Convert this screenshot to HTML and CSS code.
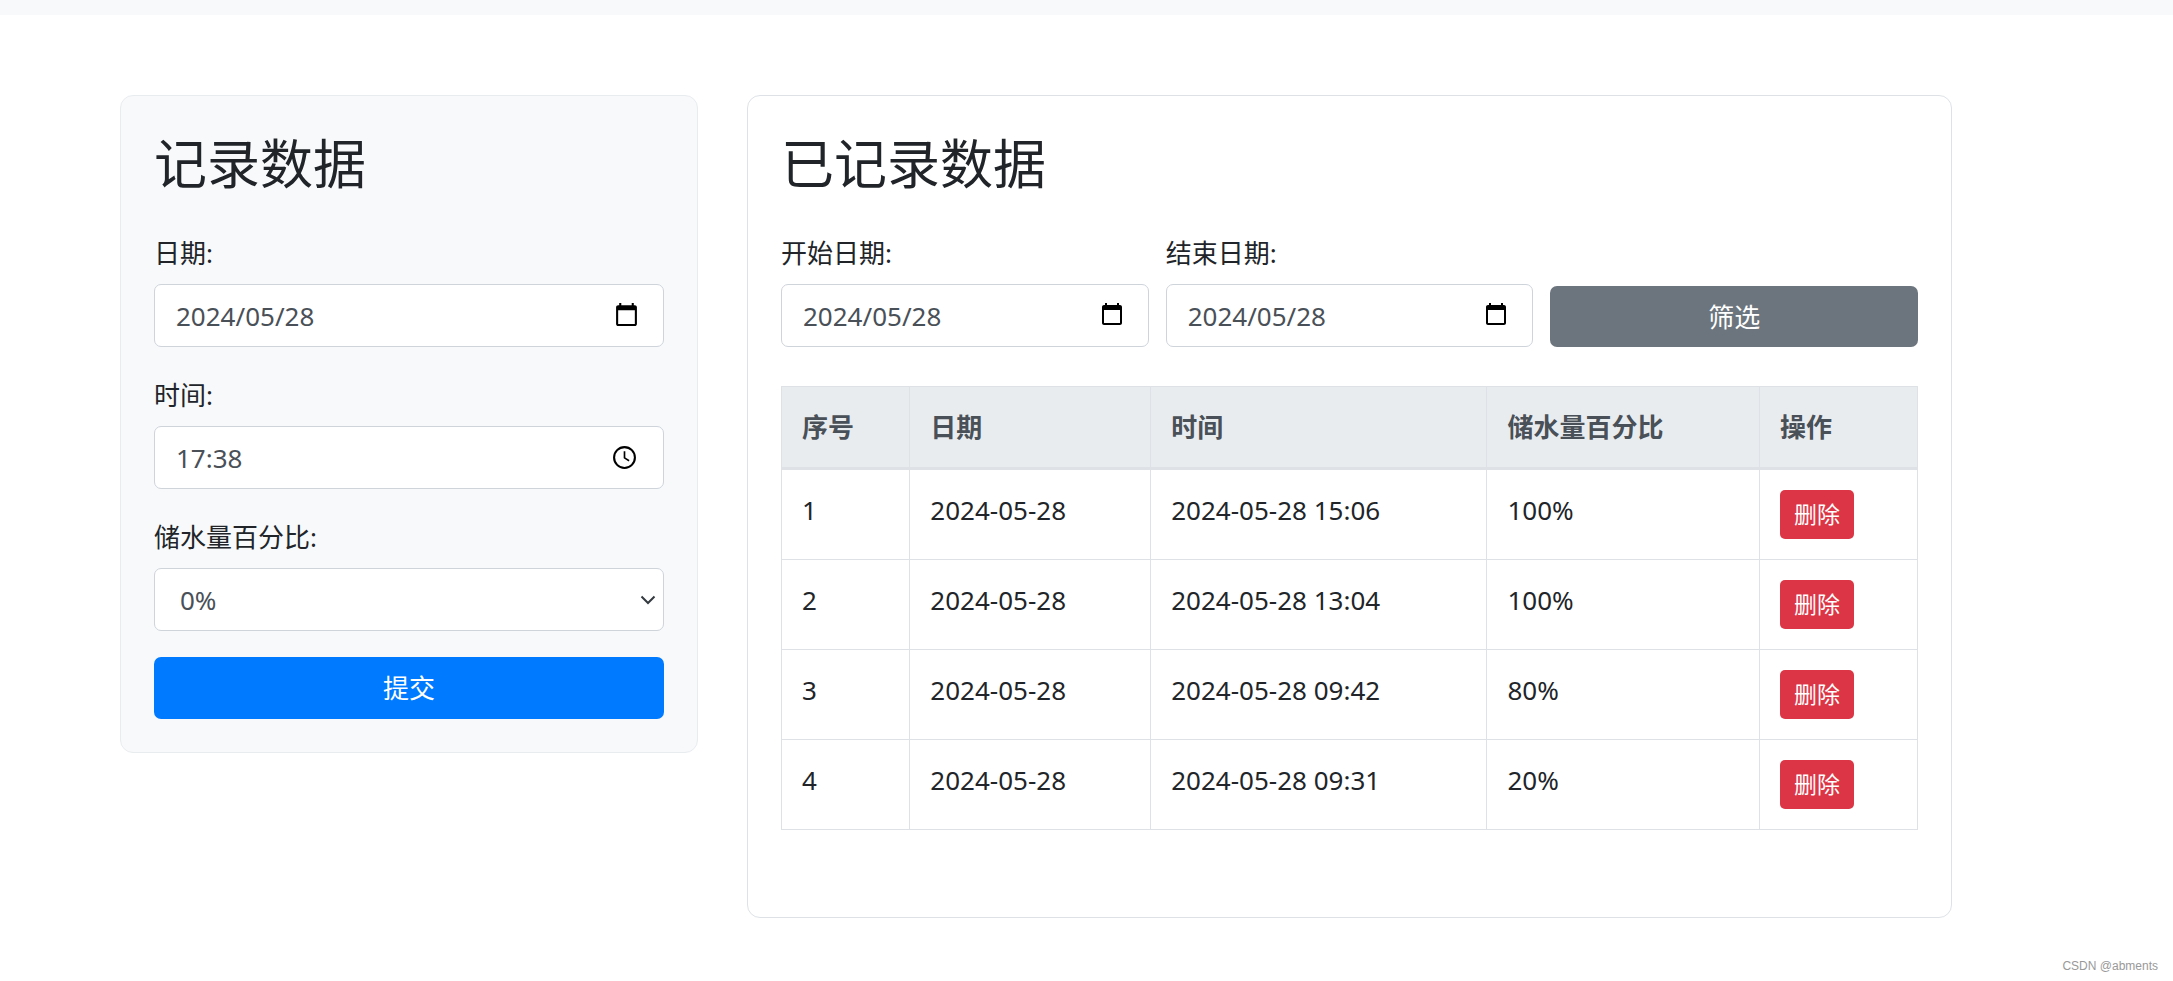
FILE: index.html
```html
<!DOCTYPE html>
<html lang="zh-CN">
<head>
<meta charset="utf-8">
<title>记录数据</title>
<link rel="stylesheet" href="styles.css">
</head>
<body>
<header class="topbar"></header>
<main class="layout">
  <section class="card card-form">
    <h1 class="title">记录数据</h1>
    <form>
      <div class="field">
        <label for="date">日期:</label>
        <div class="control">
          <input class="input" id="date" type="text" value="2024/05/28">
          <svg class="icon" viewBox="0 0 24 24" aria-hidden="true"><path d="M20 3h-1V1h-2v2H7V1H5v2H4c-1.1 0-2 .9-2 2v16c0 1.100.9 2 2 2h16c1.100 0 2-.9 2-2V5c0-1.100-.9-2-2-2zm0 18H4V8h16v13z"/></svg>
        </div>
      </div>
      <div class="field">
        <label for="time">时间:</label>
        <div class="control">
          <input class="input" id="time" type="text" value="17:38">
          <svg class="icon icon-clock" viewBox="0 0 24 24" aria-hidden="true"><circle cx="12" cy="12" r="10" fill="none" stroke="#000" stroke-width="2"/><path d="M11.200 6v6.800l4.800 3 .8-1.300-4-2.400V6z"/></svg>
        </div>
      </div>
      <div class="field">
        <label for="level">储水量百分比:</label>
        <div class="control">
          <select class="input select" id="level"><option>0%</option></select>
          <svg class="chevron" viewBox="0 0 16 10" aria-hidden="true"><path d="M1.500 1.500 8 8l6.500-6.500" fill="none" stroke="#343a40" stroke-width="2"/></svg>
        </div>
      </div>
      <button class="btn btn-primary" type="button">提交</button>
    </form>
  </section>

  <section class="card card-list">
    <h1 class="title">已记录数据</h1>
    <form class="filters">
      <div>
        <label for="start">开始日期:</label>
        <div class="control">
          <input class="input" id="start" type="text" value="2024/05/28">
          <svg class="icon icon-small" viewBox="0 0 24 24" aria-hidden="true"><path d="M20 3h-1V1h-2v2H7V1H5v2H4c-1.1 0-2 .9-2 2v16c0 1.100.9 2 2 2h16c1.100 0 2-.9 2-2V5c0-1.100-.9-2-2-2zm0 18H4V8h16v13z"/></svg>
        </div>
      </div>
      <div>
        <label for="end">结束日期:</label>
        <div class="control">
          <input class="input" id="end" type="text" value="2024/05/28">
          <svg class="icon icon-small" viewBox="0 0 24 24" aria-hidden="true"><path d="M20 3h-1V1h-2v2H7V1H5v2H4c-1.1 0-2 .9-2 2v16c0 1.100.9 2 2 2h16c1.100 0 2-.9 2-2V5c0-1.100-.9-2-2-2zm0 18H4V8h16v13z"/></svg>
        </div>
      </div>
      <button class="btn btn-secondary" type="button">筛选</button>
    </form>
    <table class="table">
      <colgroup><col class="c-id"><col class="c-date"><col class="c-time"><col class="c-level"><col></colgroup>
      <thead>
        <tr><th>序号</th><th>日期</th><th>时间</th><th>储水量百分比</th><th>操作</th></tr>
      </thead>
      <tbody>
        <tr><td>1</td><td>2024-05-28</td><td>2024-05-28 15:06</td><td>100%</td><td><button class="btn-delete" type="button">删除</button></td></tr>
        <tr><td>2</td><td>2024-05-28</td><td>2024-05-28 13:04</td><td>100%</td><td><button class="btn-delete" type="button">删除</button></td></tr>
        <tr><td>3</td><td>2024-05-28</td><td>2024-05-28 09:42</td><td>80%</td><td><button class="btn-delete" type="button">删除</button></td></tr>
        <tr><td>4</td><td>2024-05-28</td><td>2024-05-28 09:31</td><td>20%</td><td><button class="btn-delete" type="button">删除</button></td></tr>
      </tbody>
    </table>
  </section>
</main>
<footer class="credit">CSDN @abments</footer>
</body>
</html>
```

FILE: styles.css
```css
* { box-sizing: border-box; }

body {
  margin: 0;
  background: #fff;
  color: #212529;
  font-family: "Noto Sans", "Noto Sans CJK SC", sans-serif;
  font-size: 26px;
  line-height: 40px;
}

button, input, select { font: inherit; }

.topbar {
  height: 15px;
  background: #f8f9fb;
}

.layout {
  display: grid;
  grid-template-columns: 578fr 1205fr;
  align-items: start;
  gap: 49px;
  padding: 80px 221px 0 120px;
}

.card {
  padding: 33px;
  border: 1px solid #dee2e6;
  border-radius: 13px;
}

.card-form {
  background: #f8f9fb;
  border-color: #e9ecef;
}

.card-list { padding-bottom: 87px; }

.title {
  margin: 0 0 40px;
  font-family: "Noto Sans CJK SC", sans-serif;
  font-size: 53px;
  font-weight: 400;
  line-height: 64px;
}

label {
  display: block;
  margin-bottom: 11px;
}

.field { margin-bottom: 28px; }
.field:nth-child(3) { margin-bottom: 26px; }

.control { position: relative; }

.input {
  display: block;
  width: 100%;
  height: 63px;
  padding: 0 21px;
  border: 1px solid #ced4da;
  border-radius: 7px;
  background: #fff;
  color: #495057;
}

.select {
  padding-left: 25px;
  appearance: none;
}

.icon, .chevron {
  position: absolute;
  pointer-events: none;
}

.icon {
  top: 18px;
  right: 25px;
  width: 25px;
  height: 25px;
}

.icon-clock {
  top: 19px;
  right: 27px;
}

.icon-small {
  width: 24px;
  height: 24px;
}

.chevron {
  top: 27px;
  right: 8px;
  width: 16px;
  height: 10px;
}

.btn {
  display: block;
  width: 100%;
  height: 62px;
  padding: 0;
  border: 0;
  border-radius: 7px;
  color: #fff;
}

.btn-primary { background: #007bff; }

.btn-secondary {
  height: 61px;
  background: #6c757d;
}

.filters {
  display: grid;
  grid-template-columns: repeat(3, 1fr);
  align-items: end;
  gap: 17px;
  margin-bottom: 39px;
}

.table {
  width: 100%;
  table-layout: fixed;
  border-collapse: collapse;
}

.c-id { width: 11.3%; }
.c-date { width: 21.2%; }
.c-time { width: 29.6%; }
.c-level { width: 24%; }

.table th, .table td {
  padding: 20px;
  border: 1px solid #dee2e6;
  text-align: left;
  vertical-align: top;
}

.table th {
  border-bottom-width: 3px;
  background: #e9ecef;
  color: #495057;
  font-weight: 700;
}

.btn-delete {
  display: block;
  padding: 7px 14px;
  border: 0;
  border-radius: 5px;
  background: #dc3545;
  color: #fff;
  font-size: 23px;
  line-height: 35px;
}

.credit {
  padding: 38px 15px 0 0;
  color: #999;
  font-family: "Liberation Sans", Arial, sans-serif;
  font-size: 12px;
  line-height: 20px;
  text-align: right;
}
```
